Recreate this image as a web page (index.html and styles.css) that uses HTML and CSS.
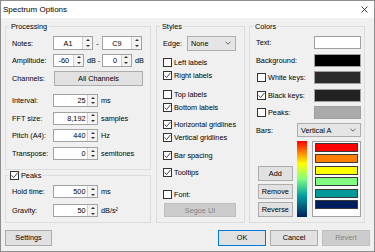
FILE: index.html
```html
<!DOCTYPE html>
<html lang="en">
<head>
    <meta charset="UTF-8">
    <title>Spectrum Options</title>
    <link rel="stylesheet" href="styles.css">
</head>
<body>
    <div class="window">
        <div class="titlebar">
            <span class="title">Spectrum Options</span>
            <svg class="close" width="7" height="7" viewBox="0 0 7 7"><path d="M0.5 0.5L6.5 6.5M6.5 0.5L0.5 6.5" stroke="#222" stroke-width="0.9" fill="none"/></svg>
        </div>

        <div class="content">
            <div class="col-left">
                <fieldset class="group processing">
                    <legend>Processing</legend>
                    <div class="row">
                        <span class="lbl">Notes:</span>
                        <span class="spin notes"><span class="val center">A1</span><span class="arrows"><i class="up"></i><i class="down"></i></span></span>
                        <span class="sep wide">-</span>
                        <span class="spin notes"><span class="val center">C9</span><span class="arrows"><i class="up"></i><i class="down"></i></span></span>
                    </div>
                    <div class="row">
                        <span class="lbl">Amplitude:</span>
                        <span class="spin amp"><span class="val pad4">-60</span><span class="arrows"><i class="up"></i><i class="down"></i></span></span>
                        <span class="unit">dB</span>
                        <span class="sep">-</span>
                        <span class="spin amp2"><span class="val pad4">0</span><span class="arrows"><i class="up"></i><i class="down"></i></span></span>
                        <span class="unit">dB</span>
                    </div>
                    <div class="row channels">
                        <span class="lbl">Channels:</span>
                        <span class="btn channel-btn">All Channels</span>
                    </div>
                    <div class="row tall first-num">
                        <span class="lbl">Interval:</span>
                        <span class="spin num"><span class="val">25</span><span class="arrows"><i class="up"></i><i class="down"></i></span></span>
                        <span class="unit">ms</span>
                    </div>
                    <div class="row tall">
                        <span class="lbl">FFT size:</span>
                        <span class="spin num"><span class="val">8,192</span><span class="arrows"><i class="up"></i><i class="down"></i></span></span>
                        <span class="unit">samples</span>
                    </div>
                    <div class="row tall">
                        <span class="lbl">Pitch (A4):</span>
                        <span class="spin num"><span class="val">440</span><span class="arrows"><i class="up"></i><i class="down"></i></span></span>
                        <span class="unit">Hz</span>
                    </div>
                    <div class="row tall">
                        <span class="lbl">Transpose:</span>
                        <span class="spin num"><span class="val">0</span><span class="arrows"><i class="up"></i><i class="down"></i></span></span>
                        <span class="unit">semitones</span>
                    </div>
                </fieldset>

                <fieldset class="group peaks">
                    <legend class="check-legend"><span class="cb"><svg width="7" height="7" viewBox="0 0 7 7"><polyline points="0.6,3.4 2.6,5.6 6.5,0.9" fill="none" stroke="#333" stroke-width="0.9"/></svg></span>Peaks</legend>
                    <div class="row">
                        <span class="lbl">Hold time:</span>
                        <span class="spin num"><span class="val">500</span><span class="arrows"><i class="up"></i><i class="down"></i></span></span>
                        <span class="unit">ms</span>
                    </div>
                    <div class="row gravity">
                        <span class="lbl">Gravity:</span>
                        <span class="spin num"><span class="val">50</span><span class="arrows"><i class="up"></i><i class="down"></i></span></span>
                        <span class="unit">dB/s²</span>
                    </div>
                </fieldset>
            </div>

            <fieldset class="group styles">
                <legend>Styles</legend>
                <div class="row">
                    <span class="edge-lbl">Edge:</span>
                    <span class="combo edge-combo">None<svg class="chev" width="6" height="4" viewBox="0 0 6 4"><polyline points="0.5,0.8 3,3.2 5.5,0.8" fill="none" stroke="#444" stroke-width="0.8"/></svg></span>
                </div>
                <div class="check gap4"><span class="cb"></span>Left labels</div>
                <div class="check"><span class="cb"><svg width="7" height="7" viewBox="0 0 7 7"><polyline points="0.6,3.4 2.6,5.6 6.5,0.9" fill="none" stroke="#333" stroke-width="0.9"/></svg></span>Right labels</div>
                <div class="check gap6"><span class="cb"></span>Top labels</div>
                <div class="check"><span class="cb"><svg width="7" height="7" viewBox="0 0 7 7"><polyline points="0.6,3.4 2.6,5.6 6.5,0.9" fill="none" stroke="#333" stroke-width="0.9"/></svg></span>Bottom labels</div>
                <div class="check gap4"><span class="cb"><svg width="7" height="7" viewBox="0 0 7 7"><polyline points="0.6,3.4 2.6,5.6 6.5,0.9" fill="none" stroke="#333" stroke-width="0.9"/></svg></span>Horizontal gridlines</div>
                <div class="check"><span class="cb"><svg width="7" height="7" viewBox="0 0 7 7"><polyline points="0.6,3.4 2.6,5.6 6.5,0.9" fill="none" stroke="#333" stroke-width="0.9"/></svg></span>Vertical gridlines</div>
                <div class="check gap5"><span class="cb"><svg width="7" height="7" viewBox="0 0 7 7"><polyline points="0.6,3.4 2.6,5.6 6.5,0.9" fill="none" stroke="#333" stroke-width="0.9"/></svg></span>Bar spacing</div>
                <div class="check gap45"><span class="cb"><svg width="7" height="7" viewBox="0 0 7 7"><polyline points="0.6,3.4 2.6,5.6 6.5,0.9" fill="none" stroke="#333" stroke-width="0.9"/></svg></span>Tooltips</div>
                <div class="check gap85"><span class="cb"></span>Font:</div>
                <span class="btn disabled font-btn">Segoe UI</span>
            </fieldset>

            <fieldset class="group colors">
                <legend>Colors</legend>
                <div class="crow"><span>Text:</span><span class="swatch white"></span></div>
                <div class="crow"><span>Background:</span><span class="swatch black"></span></div>
                <div class="crow"><span class="cb"></span><span>White keys:</span><span class="swatch dark"></span></div>
                <div class="crow"><span class="cb"><svg width="7" height="7" viewBox="0 0 7 7"><polyline points="0.6,3.4 2.6,5.6 6.5,0.9" fill="none" stroke="#333" stroke-width="0.9"/></svg></span><span>Black keys:</span><span class="swatch darker"></span></div>
                <div class="crow"><span class="cb"></span><span>Peaks:</span><span class="swatch grey"></span></div>
                <div class="crow"><span>Bars:</span><span class="combo bars-combo">Vertical A<svg class="chev" width="6" height="4" viewBox="0 0 6 4"><polyline points="0.5,0.8 3,3.2 5.5,0.8" fill="none" stroke="#444" stroke-width="0.8"/></svg></span></div>
                <div class="bars-area">
                    <div class="bar-buttons">
                        <span class="btn">Add</span>
                        <span class="btn">Remove</span>
                        <span class="btn">Reverse</span>
                    </div>
                    <div class="gradient"></div>
                    <div class="bar-list">
                        <span class="bar red"></span>
                        <span class="bar orange"></span>
                        <span class="bar yellow"></span>
                        <span class="bar green"></span>
                        <span class="bar teal"></span>
                        <span class="bar navy"></span>
                    </div>
                </div>
            </fieldset>
        </div>

        <div class="buttons">
            <span class="btn main settings">Settings</span>
            <span class="btn main ok">OK</span>
            <span class="btn main">Cancel</span>
            <span class="btn main disabled">Revert</span>
        </div>
    </div>
</body>
</html>
```

FILE: styles.css
```css
body {
    margin: 0;
    font-family: "Liberation Sans", Arial, sans-serif;
    font-size: 7.3px;
    color: #000;
    background: #f0f0f0;
}

.window {
    width: 375px;
    height: 252px;
    box-sizing: border-box;
    border: 1px solid #8e8e8e;
    background: #f0f0f0;
    display: flex;
    flex-direction: column;
}

.titlebar {
    height: 17px;
    flex: none;
    background: #fff;
    display: flex;
    align-items: center;
    justify-content: space-between;
    padding: 0 6px 0 2px;
}

.title {
    font-size: 8px;
}

.content {
    display: flex;
    padding: 4px 0 0 4px;
}

.col-left {
    width: 146px;
    display: flex;
    flex-direction: column;
}

.group {
    margin: 0;
    min-width: 0;
    box-sizing: border-box;
    border: 1px solid #dcdcdc;
}

.group legend {
    line-height: 9px;
    padding: 0 2px;
    margin-left: -3px;
}

.processing {
    padding: 3.5px 6px 7px 6px;
}

.peaks {
    margin-top: 1px;
    padding: 3.2px 6px 3px 6px;
}

.check-legend {
    display: flex;
    align-items: center;
    gap: 2px;
}

.group legend.check-legend {
    padding: 0 1px;
}

.styles {
    width: 89px;
    margin-left: 5px;
    padding: 3.5px 6px 0 6px;
}

.colors {
    width: 116px;
    margin-left: 4px;
    padding: 3px 3px 0 6px;
}

/* rows */
.row {
    display: flex;
    align-items: center;
    height: 17px;
}

.row.tall {
    height: 17.7px;
}

.row.channels {
    margin-top: 1.5px;
}

.row.first-num {
    margin-top: 4.5px;
}

.row.gravity {
    margin-top: 2px;
}

.lbl {
    width: 41px;
    flex: none;
}

.unit {
    padding-left: 3px;
}

.sep {
    width: 6px;
    text-align: center;
}

.sep.wide {
    width: 9px;
}

/* spin boxes */
.spin {
    display: flex;
    box-sizing: border-box;
    border: 1px solid #a2a2a2;
    background: #fff;
    flex: none;
}

.spin.notes {
    width: 40px;
    height: 14px;
}

.spin.amp {
    width: 31px;
    height: 13px;
}

.spin.amp2 {
    width: 30px;
    height: 13px;
}

.spin.num {
    width: 45px;
    height: 13px;
}

.val {
    flex: 1;
    display: flex;
    align-items: center;
    justify-content: flex-end;
    padding-right: 1.5px;
}

.val.center {
    justify-content: center;
    padding-right: 0;
}

.val.pad4 {
    padding-right: 4px;
}

.arrows {
    width: 9px;
    flex: none;
    display: flex;
    flex-direction: column;
    background: #f3f3f3;
    border-left: 1px solid #cfcfcf;
}

.arrows i {
    flex: 1;
    display: flex;
    align-items: center;
    justify-content: center;
}

.arrows i::after {
    content: "";
    border-left: 2px solid transparent;
    border-right: 2px solid transparent;
}

.arrows .up::after {
    border-bottom: 2px solid #333;
}

.arrows .down::after {
    border-top: 2px solid #333;
}

/* buttons */
.btn {
    display: flex;
    align-items: center;
    justify-content: center;
    box-sizing: border-box;
    border: 1px solid #adadad;
    background: #e1e1e1;
}

.btn.disabled {
    background: #cccccc;
    border-color: #bfbfbf;
    color: #838383;
}

.channel-btn {
    width: 89px;
    height: 15px;
    margin-left: 1px;
}

.font-btn {
    width: 72px;
    height: 14px;
    margin: 2.5px 0 0 1px;
}

/* check boxes */
.cb {
    width: 9px;
    height: 9px;
    box-sizing: border-box;
    border: 1px solid #333;
    background: #fff;
    display: inline-flex;
    flex: none;
}

.check {
    display: flex;
    align-items: center;
    gap: 2px;
    height: 13px;
}

.check.gap4 { margin-top: 4px; }
.check.gap45 { margin-top: 4.5px; }
.check.gap5 { margin-top: 5px; }
.check.gap6 { margin-top: 6px; }
.check.gap85 { margin-top: 8.5px; }

/* combos */
.combo {
    display: flex;
    align-items: center;
    justify-content: space-between;
    box-sizing: border-box;
    border: 1px solid #adadad;
    background: #e5e5e5;
    padding: 0 4px 0 3px;
}

.edge-lbl {
    width: 24px;
}

.edge-combo {
    width: 49px;
    height: 15px;
}

.bars-combo {
    width: 64px;
    height: 14px;
    margin-left: auto;
}

/* colors */
.crow {
    display: flex;
    align-items: center;
    gap: 2px;
    height: 17.5px;
}

.crow .cb {
    margin-left: 1px;
}

.swatch {
    width: 47px;
    height: 13px;
    margin-left: auto;
    box-sizing: border-box;
    border: 1px solid #a0a0a0;
}

.swatch.white { background: #fff; }
.swatch.black { background: #000; }
.swatch.dark { background: #2b2b2b; }
.swatch.darker { background: #222; }
.swatch.grey { background: #aaa; }

.bars-area {
    display: flex;
    margin-top: 2px;
    height: 76px;
}

.bar-buttons {
    width: 35px;
    margin-left: 2px;
    display: flex;
    flex-direction: column;
    justify-content: flex-end;
    gap: 3px;
}

.bar-buttons .btn {
    height: 15px;
}

.gradient {
    width: 11px;
    margin-left: 4px;
    background: linear-gradient(to bottom, #ff0000 0%, #ff7a00 14%, #ffff00 30%, #80ff80 50%, #00a0a0 72%, #00205f 100%);
}

.bar-list {
    width: 49px;
    margin-left: 5px;
    box-sizing: border-box;
    border: 1px solid #a0a0a0;
    background: #fff;
    padding: 1px 2px;
    display: flex;
    flex-direction: column;
    gap: 2.4px;
}

.bar {
    height: 9px;
    box-sizing: border-box;
    border: 1px solid #3a3a3a;
}

.bar.red { background: #ff0000; }
.bar.orange { background: #ff8000; }
.bar.yellow { background: #ffff00; }
.bar.green { background: #80ff80; }
.bar.teal { background: #009999; }
.bar.navy { background: #001e5e; }

/* bottom row */
.buttons {
    display: flex;
    gap: 4px;
    padding: 0 4px;
    margin-top: 6.5px;
}

.btn.main {
    width: 48px;
    height: 16px;
}

.btn.settings {
    width: 47px;
    margin-right: auto;
}

.btn.ok {
    border-color: #0078d7;
}
```
